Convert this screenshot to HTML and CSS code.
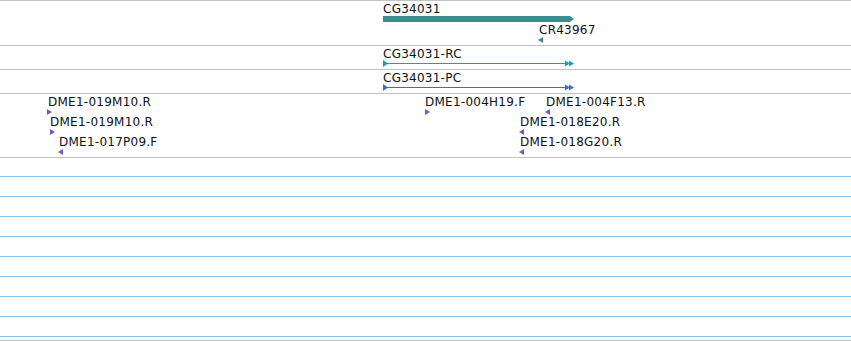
FILE: index.html
```html
<!DOCTYPE html>
<html lang="en">
<head>
    <meta charset="UTF-8" />
    <title>Tracks</title>
    <link rel="stylesheet" href="styles.css">
</head>
<body>

    <div class="browser">

        <!-- gene track -->
        <div class="track track-first" style="height:44px">
            <div class="label" style="left:383px;top:1px">CG34031</div>
            <svg class="glyph gene" style="left:383px;top:15px" width="192" height="6">
                <polygon points="0,0 187,0 191,3 187,6 0,6" />
            </svg>
            <div class="label" style="left:539px;top:22px">CR43967</div>
            <svg class="glyph gene" style="left:538px;top:36px" width="6" height="6">
                <polygon points="0,3 5,0 5,6" />
            </svg>
        </div>

        <!-- transcript RC -->
        <div class="track" style="height:23px">
            <div class="label" style="left:383px;top:1px">CG34031-RC</div>
            <svg class="glyph rna" style="left:383px;top:14px" width="192" height="7">
                <rect x="0" y="3" width="188" height="1" />
                <polygon points="0,0 5,3.5 0,7" />
                <polygon points="182,0.5 187,3.5 182,6.5" />
                <polygon points="186,0.5 191,3.5 186,6.5" />
            </svg>
        </div>

        <!-- transcript PC -->
        <div class="track" style="height:23px">
            <div class="label" style="left:383px;top:1px">CG34031-PC</div>
            <svg class="glyph cds" style="left:383px;top:14px" width="192" height="7">
                <rect x="0" y="3" width="188" height="1" />
                <polygon points="0,0 5,3.5 0,7" />
                <polygon points="182,0.5 187,3.5 182,6.5" />
                <polygon points="186,0.5 191,3.5 186,6.5" />
            </svg>
        </div>

        <!-- clone ends -->
        <div class="track" style="height:63px">
            <div class="label" style="left:48px;top:1px">DME1-019M10.R</div>
            <svg class="glyph clone" style="left:47px;top:15px" width="6" height="6"><polygon points="0,0 5,3 0,6" /></svg>

            <div class="label" style="left:50px;top:21px">DME1-019M10.R</div>
            <svg class="glyph clone" style="left:50px;top:35px" width="6" height="6"><polygon points="0,0 5,3 0,6" /></svg>

            <div class="label" style="left:59px;top:41px">DME1-017P09.F</div>
            <svg class="glyph clone" style="left:58px;top:55px" width="6" height="6"><polygon points="0,3 5,0 5,6" /></svg>

            <div class="label" style="left:425px;top:1px">DME1-004H19.F</div>
            <svg class="glyph clone" style="left:425px;top:15px" width="6" height="6"><polygon points="0,0 5,3 0,6" /></svg>

            <div class="label" style="left:546px;top:1px">DME1-004F13.R</div>
            <svg class="glyph clone" style="left:545px;top:15px" width="6" height="6"><polygon points="0,3 5,0 5,6" /></svg>

            <div class="label" style="left:520px;top:21px">DME1-018E20.R</div>
            <svg class="glyph clone" style="left:519px;top:35px" width="6" height="6"><polygon points="0,3 5,0 5,6" /></svg>

            <div class="label" style="left:520px;top:41px">DME1-018G20.R</div>
            <svg class="glyph clone" style="left:519px;top:55px" width="6" height="6"><polygon points="0,3 5,0 5,6" /></svg>
        </div>

        <!-- empty track -->
        <div class="track empty">
            <div class="row"></div>
            <div class="row"></div>
            <div class="row"></div>
            <div class="row"></div>
            <div class="row"></div>
            <div class="row"></div>
            <div class="row"></div>
            <div class="row"></div>
            <div class="row"></div>
        </div>

    </div>

</body>
</html>
```

FILE: styles.css
```css
body {
    margin: 0;
    background: #fff;
}

.browser {
    width: 851px;
    font-family: "DejaVu Sans", Verdana, sans-serif;
    font-size: 12px;
    line-height: 14px;
    letter-spacing: 0.25px;
    color: #111;
}

.track {
    position: relative;
    border-bottom: 1px solid #c3c3c3;
}

.track-first {
    border-top: 1px solid #c3c3c3;
}

.label {
    position: absolute;
    white-space: nowrap;
}

.glyph {
    position: absolute;
    display: block;
}

.gene {
    fill: #3f8c8f;
}
.rna {
    fill: #1a9dc4;
}
.cds {
    fill: #3a6dd0;
}
.clone {
    fill: #7458c0;
}

.empty {
    padding-bottom: 3px;
}

.row {
    height: 19px;
    border-bottom: 1px solid #8ec2e8;
}
.row:first-child {
    height: 18px;
}
```
